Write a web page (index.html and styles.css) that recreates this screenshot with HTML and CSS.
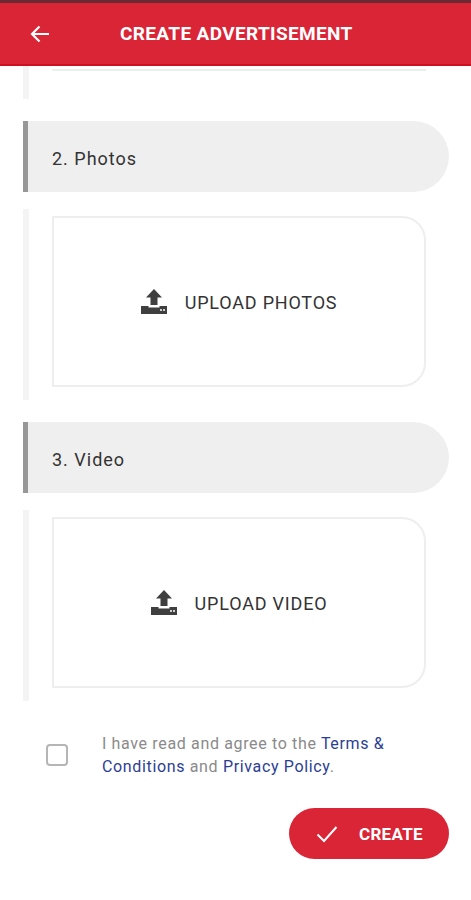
FILE: index.html
```html
<!DOCTYPE html>
<html>
  <head>
    <meta name="viewport" content="width=device-width, initial-scale=1" />
    <title>Create Advertisement</title>
    <link rel="stylesheet" href="styles.css">
  </head>
  <body>
    <!-- Status bar strip and app bar -->
    <div class="status-strip"></div>
    <header class="app-bar">
      <svg class="back-icon" viewBox="0 0 20 18" width="20" height="18" aria-label="Back">
        <path d="M19 9H2M9.500 1.500L2 9l7.500 7.500" fill="none" stroke="#fff" stroke-width="2.200" />
      </svg>
      <h1>CREATE ADVERTISEMENT</h1>
    </header>

    <main class="content">
      <!-- End of the previous section, scrolled off -->
      <div class="rail rail-stub">
        <div class="stub-line"></div>
      </div>

      <h2 class="section-head">2. Photos</h2>
      <div class="rail">
        <div class="upload-card">
          <svg class="upload-icon" viewBox="0 0 26 25" width="26" height="25">
            <path d="M13 0L21 8.500H16.500V16H9.500V8.500H5z" fill="#3f3f3f" />
            <path d="M0 17H7.500V18.500H18.500V17H26V25H0z" fill="#3f3f3f" />
            <circle cx="20" cy="21" r="1" fill="#fff" />
            <circle cx="23" cy="21" r="1" fill="#fff" />
          </svg>
          <span class="upload-label">UPLOAD PHOTOS</span>
        </div>
      </div>

      <h2 class="section-head">3. Video</h2>
      <div class="rail">
        <div class="upload-card">
          <svg class="upload-icon" viewBox="0 0 26 25" width="26" height="25">
            <path d="M13 0L21 8.500H16.500V16H9.500V8.500H5z" fill="#3f3f3f" />
            <path d="M0 17H7.500V18.500H18.500V17H26V25H0z" fill="#3f3f3f" />
            <circle cx="20" cy="21" r="1" fill="#fff" />
            <circle cx="23" cy="21" r="1" fill="#fff" />
          </svg>
          <span class="upload-label">UPLOAD VIDEO</span>
        </div>
      </div>

      <!-- Terms checkbox -->
      <div class="terms">
        <span class="checkbox"></span>
        <p>I have read and agree to the <a href="#">Terms &amp; Conditions</a> and <a href="#">Privacy Policy</a>.</p>
      </div>

      <div class="actions">
        <button class="create-btn" type="button">
          <svg viewBox="0 0 22 18" width="22" height="18">
            <path d="M1.500 9.500L8 16L20.500 2" fill="none" stroke="#fff" stroke-width="2" />
          </svg>
          CREATE
        </button>
      </div>
    </main>
  </body>
</html>
```

FILE: styles.css
```css
* {
  box-sizing: border-box;
  margin: 0;
  padding: 0;
}

body {
  font-family: 'Roboto', 'Liberation Sans', sans-serif;
  background-color: #ffffff;
  color: #333333;
}

.status-strip {
  height: 3px;
  background-color: #6b2a33;
}

/* App bar */
.app-bar {
  height: 63px;
  display: flex;
  align-items: center;
  padding-left: 30px;
  background-color: #d92536;
  border-bottom: 2px solid #cf0f22;
  color: #ffffff;
}

.back-icon {
  flex-shrink: 0;
}

.app-bar h1 {
  margin-left: 70px;
  font-size: 19px;
  font-weight: 700;
  letter-spacing: 0.350px;
  white-space: nowrap;
}

.content {
  padding: 0 22px 0 23px;
}

/* Grey line to the left of each section body */
.rail {
  border-left: 6px solid #f4f4f4;
  padding: 7px 23px 13px;
  margin-bottom: 22px;
}

.rail-stub {
  height: 33px;
  padding: 3px 0 0 23px;
}

.stub-line {
  width: 374px;
  height: 2px;
  background-color: #eeeeee;
}

.section-head {
  height: 71px;
  display: flex;
  align-items: center;
  padding: 3px 0 0 24px;
  margin-bottom: 17px;
  font-size: 18px;
  font-weight: 400;
  letter-spacing: 1px;
  color: #333333;
  background-color: #efefef;
  border-left: 5px solid #979797;
  border-radius: 0 36px 36px 0;
}

.upload-card {
  width: 374px;
  height: 171px;
  display: flex;
  align-items: center;
  justify-content: center;
  gap: 18px;
  font-size: 18px;
  letter-spacing: 0.800px;
  color: #333333;
  border: 2px solid #eeeeee;
  border-radius: 0 24px 24px 0;
}

.upload-icon {
  flex-shrink: 0;
}

.upload-label {
  margin-top: 2px;
}

/* Terms row */
.terms {
  display: flex;
  align-items: center;
  margin: 31px 0 0 23px;
}

.checkbox {
  width: 22px;
  height: 22px;
  flex-shrink: 0;
  border: 2px solid #b5b5b5;
  border-radius: 4px;
}

.terms p {
  width: 300px;
  margin-left: 34px;
  font-size: 16px;
  line-height: 23px;
  letter-spacing: 0.650px;
  color: #8a8a8a;
}

.terms a {
  color: #2c3e94;
  text-decoration: none;
}

.actions {
  display: flex;
  justify-content: flex-end;
  margin-top: 30px;
}

.create-btn {
  width: 160px;
  height: 51px;
  display: flex;
  align-items: center;
  padding-left: 27px;
  gap: 21px;
  border: none;
  border-radius: 26px;
  font-family: inherit;
  font-size: 17px;
  font-weight: 700;
  letter-spacing: 0.300px;
  color: #ffffff;
  background-color: #d92536;
}
```
